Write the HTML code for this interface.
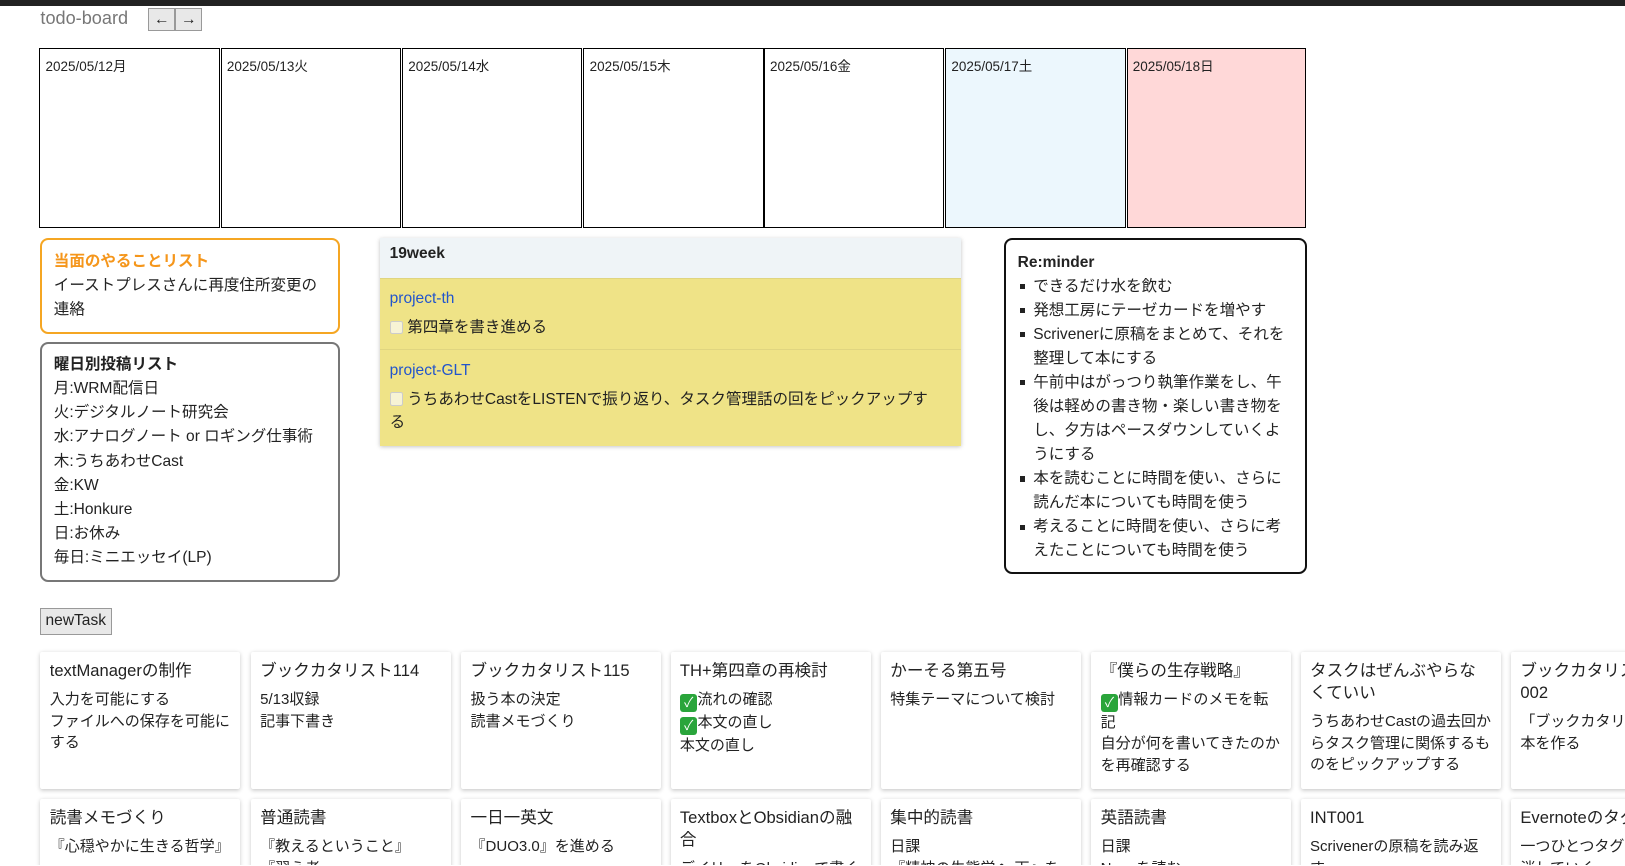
<!DOCTYPE html>
<html><head><meta charset="utf-8"><style>
*{box-sizing:border-box}
html,body{margin:0;background:#fff;overflow:hidden;width:1625px;height:866px}
#w{zoom:1.0364;position:relative;width:1568px;height:835px;overflow:hidden;font-family:"Liberation Sans","Noto Sans CJK JP",sans-serif;color:#222;font-size:15px}
.top{position:absolute;left:0;top:0;width:1568px;height:6px;background:#222}
.title{position:absolute;left:39px;top:8px;font-size:17.5px;color:#777}
.btns{position:absolute;left:143px;top:8px;display:flex}
.btns span{width:26px;height:22px;background:#e8e8e8;border:1px solid #999;display:flex;align-items:center;justify-content:center;font-size:15px;color:#222}
.cal{position:absolute;top:46px;height:174px;border:1px solid #000;font-size:13px;padding:6px 5px}
.box{position:absolute;border-radius:8px;padding:10px 11px;line-height:23.2px;font-size:15px}
.wk{position:absolute;left:367px;top:230px;width:560px;box-shadow:0 1px 4px rgba(0,0,0,.25)}
.wk .h{background:#eff4f7;height:38px;padding:6px 9px;font-weight:bold}
.wk .p{background:#efe387;padding:8px 30px 8px 9px;line-height:23px;border-top:1px solid #e0d580}
.wk a{color:#2255cc;text-decoration:none;display:block;margin-bottom:5px}
.cb{display:inline-block;width:13px;height:13px;background:#f7f3d5;border:1px solid #ccc;border-radius:2px;vertical-align:-2px;margin-right:4px}
ul{margin:0;padding:0;list-style:none}
li{padding-left:15px;position:relative}
li:before{content:"";position:absolute;left:2px;top:9px;width:5px;height:5px;background:#222}
.nt{position:absolute;left:39px;top:587px;width:69px;height:26px;background:#e8e8e8;border:1px solid #999;font-size:15px;padding:3px 4px}
.card{position:absolute;width:193px;height:132px;background:#fff;box-shadow:0 1px 4px rgba(0,0,0,.22);border-radius:2px;padding:8px 9px;font-size:14.5px;line-height:20.8px;overflow:hidden}
.card .t{font-size:16px;margin-bottom:7px;line-height:21px}
.ck{display:inline-block;width:17px;height:17px;background:#2aa53b;border-radius:3px;color:#fff;font-size:13px;text-align:center;line-height:17px;vertical-align:-3px}
</style></head><body><div id="w">
<div class="top"></div>
<div class="title">todo-board</div>
<div class="btns"><span>←</span><span>→</span></div>
<div class="cal" style="left:38px;width:174px">2025/05/12月</div>
<div class="cal" style="left:213px;width:174px">2025/05/13火</div>
<div class="cal" style="left:388px;width:174px">2025/05/14水</div>
<div class="cal" style="left:563px;width:174px">2025/05/15木</div>
<div class="cal" style="left:737px;width:174px">2025/05/16金</div>
<div class="cal" style="left:912px;width:174px;background:#ecf7fd">2025/05/17土</div>
<div class="cal" style="left:1087px;width:173px;background:#ffd8d8">2025/05/18日</div>

<div class="box" style="left:39px;top:230px;width:289px;height:92px;border:2px solid #f5a623;padding-top:9px"><div style="color:#f5961b;font-weight:bold">当面のやることリスト</div>イーストプレスさんに再度住所変更の連絡</div>
<div class="box" style="left:39px;top:330px;width:289px;height:232px;border:2px solid #777;padding-top:9px"><b>曜日別投稿リスト</b><br>月:WRM配信日<br>火:デジタルノート研究会<br>水:アナログノート or ロギング仕事術<br>木:うちあわせCast<br>金:KW<br>土:Honkure<br>日:お休み<br>毎日:ミニエッセイ(LP)</div>

<div class="wk"><div class="h">19week</div>
<div class="p" style="height:69px"><a>project-th</a><span class="cb"></span>第四章を書き進める</div>
<div class="p" style="height:93px"><a>project-GLT</a><span class="cb"></span>うちあわせCastをLISTENで振り返り、タスク管理話の回をピックアップする</div></div>

<div class="box" style="left:969px;top:230px;width:292px;height:324px;border:2px solid #111;padding-top:10px"><b>Re:minder</b><ul>
<li>できるだけ水を飲む</li><li>発想工房にテーゼカードを増やす</li><li>Scrivenerに原稿をまとめて、それを整理して本にする</li><li>午前中はがっつり執筆作業をし、午後は軽めの書き物・楽しい書き物をし、夕方はペースダウンしていくようにする</li><li>本を読むことに時間を使い、さらに読んだ本についても時間を使う</li><li>考えることに時間を使い、さらに考えたことについても時間を使う</li></ul></div>

<div class="nt">newTask</div>

<div class="card" style="left:39px;top:629px"><div class="t">textManagerの制作</div>入力を可能にする<br>ファイルへの保存を可能にする</div>
<div class="card" style="left:242px;top:629px"><div class="t">ブックカタリスト114</div>5/13収録<br>記事下書き</div>
<div class="card" style="left:445px;top:629px"><div class="t">ブックカタリスト115</div>扱う本の決定<br>読書メモづくり</div>
<div class="card" style="left:647px;top:629px"><div class="t">TH+第四章の再検討</div><span class="ck">✓</span>流れの確認<br><span class="ck">✓</span>本文の直し<br>本文の直し</div>
<div class="card" style="left:850px;top:629px"><div class="t">かーそる第五号</div>特集テーマについて検討</div>
<div class="card" style="left:1053px;top:629px"><div class="t">『僕らの生存戦略』</div><span class="ck">✓</span>情報カードのメモを転記<br>自分が何を書いてきたのかを再確認する</div>
<div class="card" style="left:1255px;top:629px"><div class="t">タスクはぜんぶやらなくていい</div>うちあわせCastの過去回からタスク管理に関係するものをピックアップする</div>
<div class="card" style="left:1458px;top:629px"><div class="t">ブックカタリスト<br>002</div>「ブックカタリスト方」で本を作る</div>

<div class="card" style="left:39px;top:771px"><div class="t">読書メモづくり</div>『心穏やかに生きる哲学』</div>
<div class="card" style="left:242px;top:771px"><div class="t">普通読書</div>『教えるということ』<br>『習え者</div>
<div class="card" style="left:445px;top:771px"><div class="t">一日一英文</div>『DUO3.0』を進める</div>
<div class="card" style="left:647px;top:771px"><div class="t">TextboxとObsidianの融合</div>デイリーをObsidianで書く</div>
<div class="card" style="left:850px;top:771px"><div class="t">集中的読書</div>日課<br>『精神の生態学へ 下』を</div>
<div class="card" style="left:1053px;top:771px"><div class="t">英語読書</div>日課<br>Noonを読む</div>
<div class="card" style="left:1255px;top:771px"><div class="t">INT001</div>Scrivenerの原稿を読み返す</div>
<div class="card" style="left:1458px;top:771px"><div class="t">Evernoteのタグ整理</div>一つひとつタグを確認して消していく</div>
</div></body></html>
